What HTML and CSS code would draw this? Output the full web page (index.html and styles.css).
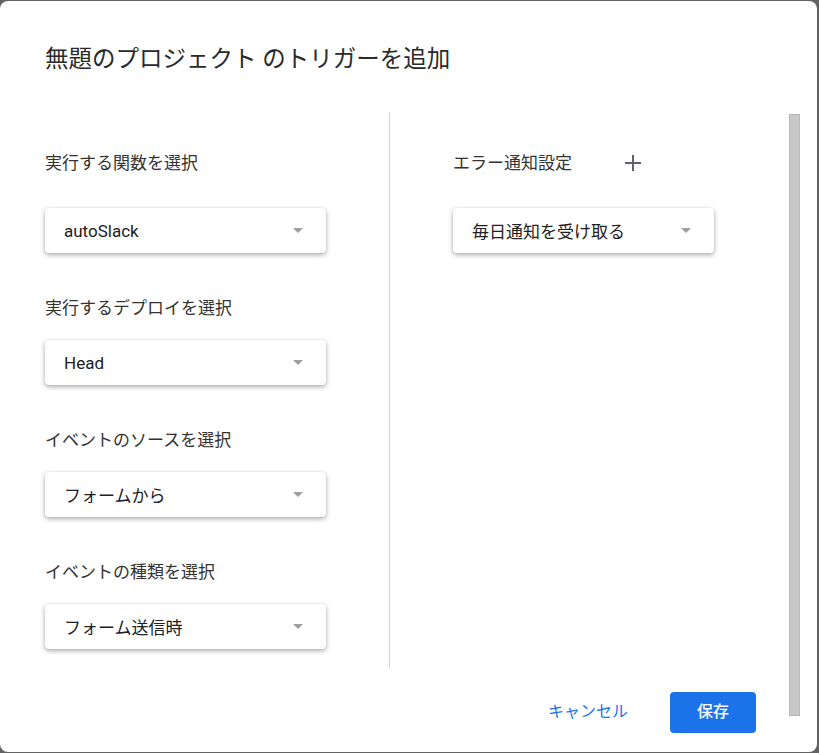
FILE: index.html
```html
<!DOCTYPE html>
<html lang="ja">
<head>
<meta charset="utf-8">
<title>トリガーを追加</title>
<link rel="stylesheet" href="styles.css">
</head>
<body>
<div class="dialog">
  <div class="main">
    <h1 class="title">無題のプロジェクト のトリガーを追加</h1>
    <div class="columns">
      <div class="col col-left">
        <div class="field field-first">
          <div class="head"><span class="label">実行する関数を選択</span></div>
          <div class="select"><span class="value">autoSlack</span><span class="arrow"></span></div>
        </div>
        <div class="field">
          <div class="label">実行するデプロイを選択</div>
          <div class="select"><span class="value">Head</span><span class="arrow"></span></div>
        </div>
        <div class="field">
          <div class="label">イベントのソースを選択</div>
          <div class="select"><span class="value">フォームから</span><span class="arrow"></span></div>
        </div>
        <div class="field">
          <div class="label">イベントの種類を選択</div>
          <div class="select"><span class="value">フォーム送信時</span><span class="arrow"></span></div>
        </div>
      </div>
      <div class="col col-right">
        <div class="field field-first">
          <div class="head">
            <span class="label">エラー通知設定</span>
            <button class="add" aria-label="追加">
              <svg width="16" height="16" viewBox="0 0 16 16"><rect x="7" y="0" width="2" height="16" fill="#5f6368"/><rect x="0" y="7" width="16" height="2" fill="#5f6368"/></svg>
            </button>
          </div>
          <div class="select select-narrow"><span class="value">毎日通知を受け取る</span><span class="arrow"></span></div>
        </div>
      </div>
    </div>
    <div class="footer">
      <button class="btn-cancel">キャンセル</button>
      <button class="btn-save">保存</button>
    </div>
  </div>
  <div class="scrollbar"></div>
</div>
</body>
</html>
```

FILE: styles.css
```css
html, body {
  margin: 0;
  padding: 0;
}
body {
  background: #626262;
  padding-top: 1px;
  height: 752px;
  font-family: Roboto, "Noto Sans CJK JP", sans-serif;
  color: #202124;
}
.dialog {
  width: 817px;
  height: 751px;
  background: #fff;
  border-radius: 8px;
  display: flex;
  box-sizing: border-box;
}
.main {
  width: 789px;
  flex: none;
  display: flex;
  flex-direction: column;
}
.title {
  margin: 0;
  padding: 44px 0 0 45px;
  font-size: 23.5px;
  line-height: 28px;
  font-weight: 400;
  color: #2a2a2a;
}
.columns {
  display: flex;
  margin-top: 40px;
}
.col {
  box-sizing: border-box;
  padding-top: 26px;
  padding-bottom: 19px;
}
.col-left {
  width: 390px;
  padding-left: 45px;
  border-right: 1px solid #d0d0d0;
}
.col-right {
  padding-left: 63px;
}
.head {
  height: 48px;
  display: flex;
  align-items: center;
}
.label {
  font-size: 17px;
  line-height: 24px;
  color: #333;
}
.field + .field {
  margin-top: 43px;
}
.field .label + .select {
  margin-top: 20px;
}
.field-first .select {
  margin-top: 21px;
}
.select {
  width: 281px;
  height: 45px;
  box-sizing: border-box;
  border-radius: 4px;
  background: #fff;
  box-shadow: 0 2px 5px rgba(0, 0, 0, 0.32), 0 0 2px rgba(0, 0, 0, 0.1);
  display: flex;
  align-items: center;
  justify-content: space-between;
  padding: 0 23px 0 19px;
}
.select-narrow {
  width: 261px;
}
.value {
  font-size: 17px;
  color: #202124;
}
.arrow {
  width: 0;
  height: 0;
  border-left: 5px solid transparent;
  border-right: 5px solid transparent;
  border-top: 5px solid #9e9e9e;
}
.add {
  width: 48px;
  height: 48px;
  margin-left: 37px;
  border: 0;
  padding: 0;
  background: transparent;
  display: flex;
  align-items: center;
  justify-content: center;
}
.footer {
  display: flex;
  justify-content: flex-end;
  align-items: center;
  margin-top: 24px;
  padding-right: 33px;
}
.btn-cancel {
  border: 0;
  background: transparent;
  font-family: inherit;
  font-size: 16px;
  color: #1a73e8;
  height: 41px;
  padding: 0 22px 5px;
  margin-right: 20px;
}
.btn-save {
  border: 0;
  width: 86px;
  height: 41px;
  padding: 0 0 5px;
  border-radius: 4px;
  background: #1a73e8;
  color: #fff;
  font-family: inherit;
  font-size: 16px;
  font-weight: 500;
}
.scrollbar {
  width: 11px;
  height: 602px;
  margin-top: 113px;
  box-sizing: border-box;
  background: #c8c8c8;
  border: 1px solid #b8b8b8;
}
```
